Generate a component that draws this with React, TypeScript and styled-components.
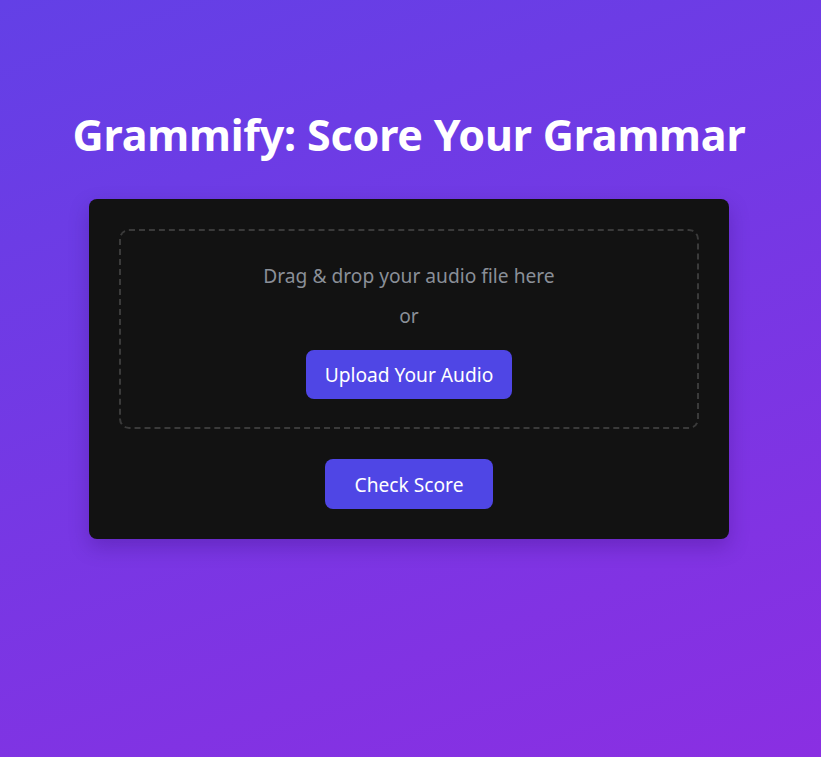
import React from "react";
import styled, { createGlobalStyle } from "styled-components";

const GlobalStyle = createGlobalStyle`
  html, body {
    margin: 0;
    padding: 0;
    min-height: 100%;
  }
  body {
    font-family: "Noto Sans", "Open Sans", sans-serif;
    background: linear-gradient(160deg, #6340e6 0%, #8a2fe2 100%);
    min-height: 757px;
  }
`;

const Page = styled.main`
  min-height: 757px;
  display: flex;
  flex-direction: column;
  align-items: center;
  padding: 104px 3px 0 0;
  box-sizing: border-box;
`;

const Title = styled.h1`
  margin: 0 0 33px;
  color: #ffffff;
  font-size: 43px;
  font-weight: 700;
  line-height: 62px;
  letter-spacing: -0.2px;
`;

const Card = styled.section`
  width: 640px;
  box-sizing: border-box;
  background: #121212;
  border-radius: 8px;
  padding: 30px;
  box-shadow: 0 8px 20px rgba(40, 0, 90, 0.25);
  display: flex;
  flex-direction: column;
  align-items: center;
  gap: 30px;
`;

const DropZone = styled.div`
  width: 100%;
  height: 200px;
  box-sizing: border-box;
  border: 2px dashed #3a3a3a;
  border-radius: 10px;
  padding: 31px 20px 28px;
  display: flex;
  flex-direction: column;
  align-items: center;
`;

const Hint = styled.p<{ $gap: number }>`
  margin: 0 0 ${(p) => p.$gap}px;
  color: #8a8f98;
  font-size: 19.2px;
  line-height: 28px;
`;

const Button = styled.button<{ $width: number }>`
  width: ${(p) => p.$width}px;
  height: 50px;
  border: none;
  border-radius: 8px;
  background: #4f46e5;
  color: #ffffff;
  font-family: inherit;
  font-size: 19.2px;
  cursor: pointer;
`;

export default function App() {
  return (
    <>
      <GlobalStyle />
      <Page>
        <Title>Grammify: Score Your Grammar</Title>
        <Card>
          <DropZone>
            <Hint $gap={12}>Drag &amp; drop your audio file here</Hint>
            <Hint $gap={20}>or</Hint>
            <Button $width={206}>Upload Your Audio</Button>
          </DropZone>
          <Button $width={168}>Check Score</Button>
        </Card>
      </Page>
    </>
  );
}
